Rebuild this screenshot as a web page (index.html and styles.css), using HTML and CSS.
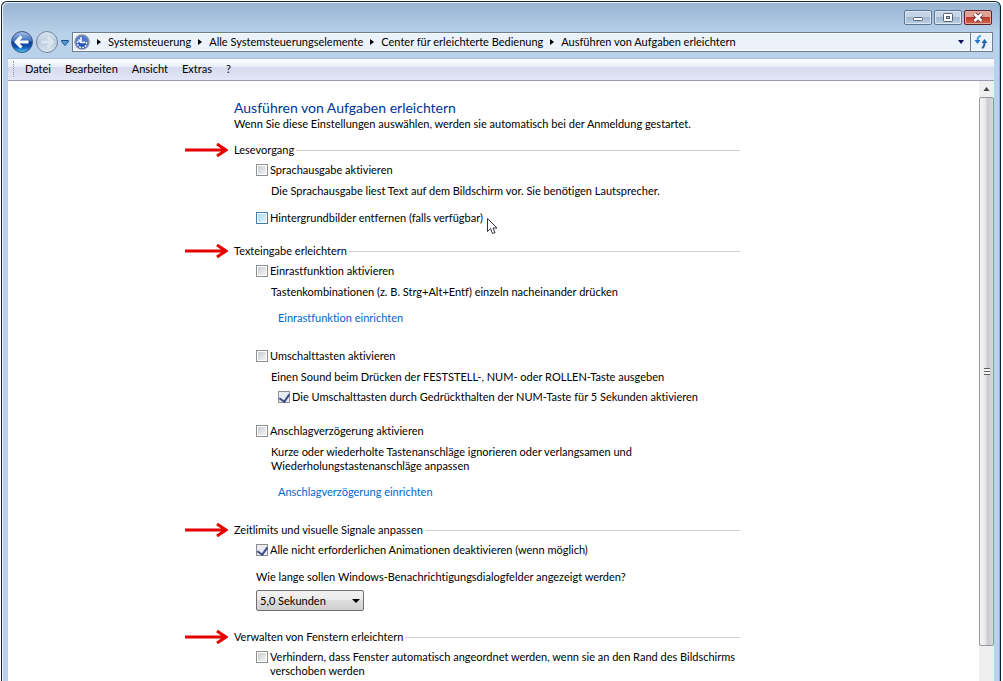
FILE: index.html
```
<!DOCTYPE html>
<html lang="de">
  <head>
    <meta charset="UTF-8" />
    <title>Ausführen von Aufgaben erleichtern</title>
    <link rel="stylesheet" href="styles.css">
  </head>
  <body>
    <div class="window">
      <header class="titlebar">
        <button class="caption" type="button" aria-label="Minimieren">
          <svg width="26" height="13" viewBox="0 0 26 13">
            <rect x="8.5" y="6.5" width="9" height="3" rx="1" fill="#fff" stroke="#535f70" />
          </svg>
        </button>
        <button class="caption" type="button" aria-label="Maximieren">
          <svg width="26" height="13" viewBox="0 0 26 13">
            <rect x="8.5" y="2.5" width="9" height="8" rx="1" fill="#fff" stroke="#535f70" />
            <rect x="11.5" y="5.5" width="3" height="2" fill="#a9bdd3" stroke="#535f70" />
          </svg>
        </button>
        <button class="caption close" type="button" aria-label="Schließen">
          <svg width="26" height="13" viewBox="0 0 26 13">
            <path d="M9.5 3 L16.5 10 M16.5 3 L9.5 10" stroke="#5c3a44" stroke-width="4.5" />
            <path d="M9.5 3 L16.5 10 M16.5 3 L9.5 10" stroke="#fff" stroke-width="2.5" />
          </svg>
        </button>
      </header>

      <div class="navbar">
        <div class="history">
          <button type="button" aria-label="Zurück">
            <svg width="24" height="24" viewBox="0 0 24 24">
              <defs>
                <linearGradient id="back" x1="0" y1="0" x2="0" y2="1">
                  <stop offset="0" stop-color="#a9c4e8" />
                  <stop offset="0.45" stop-color="#3d6fc0" />
                  <stop offset="0.5" stop-color="#0b3a94" />
                  <stop offset="0.75" stop-color="#1458b8" />
                  <stop offset="1" stop-color="#4fd4fa" />
                </linearGradient>
              </defs>
              <circle cx="12" cy="12" r="10.5" fill="url(#back)" stroke="#3c567f" />
              <path d="M11.5 6.5 L6 12 L11.5 17.5 M6.5 12 H18.5" fill="none" stroke="#fff" stroke-width="3" />
            </svg>
          </button>
          <button type="button" aria-label="Vorwärts">
            <svg width="24" height="24" viewBox="0 0 24 24">
              <defs>
                <linearGradient id="forward" x1="0" y1="0" x2="0" y2="1">
                  <stop offset="0" stop-color="#dbe5ef" />
                  <stop offset="0.5" stop-color="#b8cbdc" />
                  <stop offset="1" stop-color="#dce8f3" />
                </linearGradient>
              </defs>
              <circle cx="12" cy="12" r="10.5" fill="url(#forward)" stroke="#73879f" />
              <path d="M12.5 7 L17.5 12 L12.5 17 M17 12 H6" fill="none" stroke="#dbe6f0" stroke-width="3" />
            </svg>
          </button>
          <button type="button" aria-label="Letzte Seiten">
            <svg width="12" height="24" viewBox="0 0 12 24">
              <path d="M1.5 10.5 H8.5 V11.5 L5 15.5 L1.5 11.5 Z" fill="#4d9bd4" stroke="#1f5286" />
            </svg>
          </button>
        </div>

        <nav class="address" aria-label="Adressleiste">
          <svg width="16" height="16" viewBox="0 0 16 16">
            <circle cx="8" cy="8" r="7" fill="#4a78d4" stroke="#8a94a4" stroke-width="1.5" />
            <path d="M2.5 9 a5.500 5.500 0 0 0 11 0 z" fill="#2550b8" />
            <path d="M4 7 a4.500 4.500 0 1 0 8 0" fill="none" stroke="#e8f0ff" stroke-width="1.5" stroke-dasharray="2 1" />
            <path d="M7 3 V8.500 H11 M4.500 5.500 L7 8.500" fill="none" stroke="#fff" stroke-width="1.5" />
          </svg>
          <ol class="crumbs">
            <li><a href="#">Systemsteuerung</a></li>
            <li><a href="#">Alle Systemsteuerungselemente</a></li>
            <li><a href="#">Center für erleichterte Bedienung</a></li>
            <li><a href="#">Ausführen von Aufgaben erleichtern</a></li>
          </ol>
          <button class="recent" type="button" aria-label="Vorherige Orte">
            <svg width="18" height="18" viewBox="0 0 18 18"><path d="M6 7 H12 L9 11 Z" fill="#12125e" /></svg>
          </button>
          <button class="refresh" type="button" aria-label="Aktualisieren">
            <svg width="21" height="18" viewBox="0 0 21 18">
              <path d="M10 3 Q6.5 3 6.5 8" fill="none" stroke="#42a3dc" stroke-width="2" />
              <path d="M3.5 7 H9.5 L6.5 11 Z" fill="#2273c4" />
              <path d="M13.5 9 Q13.5 14 11 15" fill="none" stroke="#245fae" stroke-width="2" />
              <path d="M10.5 10 H16.5 L13.5 6 Z" fill="#245fae" />
            </svg>
          </button>
        </nav>
      </div>

      <div class="client">
        <nav class="menubar" aria-label="Menü">
          <button type="button">Datei</button>
          <button type="button">Bearbeiten</button>
          <button type="button">Ansicht</button>
          <button type="button">Extras</button>
          <button type="button">?</button>
        </nav>

        <div class="view">
          <main class="page">
            <h1>Ausführen von Aufgaben erleichtern</h1>
            <p class="intro">Wenn Sie diese Einstellungen auswählen, werden sie automatisch bei der Anmeldung gestartet.</p>

            <section>
              <h2>
                <svg class="arrow" width="43" height="14" viewBox="0 0 43 14"><path d="M0 7 H41 M32 1 L41 7 L32 13" /></svg>
                Lesevorgang
              </h2>
              <div class="group">
                <label class="check"><input type="checkbox"> Sprachausgabe aktivieren</label>
                <p class="hint">Die Sprachausgabe liest Text auf dem Bildschirm vor. Sie benötigen Lautsprecher.</p>
              </div>
              <div class="group">
                <label class="check hover">
                  <input type="checkbox"> Hintergrundbilder entfernen (falls verfügbar)
                  <svg class="cursor" width="12" height="19" viewBox="0 0 12 19">
                    <path d="M1.5 1.5 V14.5 L4.5 11.5 L6.5 16.5 L9 15.5 L7 11 H11 Z" fill="#fff" stroke="#303038" />
                  </svg>
                </label>
              </div>
            </section>

            <section>
              <h2>
                <svg class="arrow" width="43" height="14" viewBox="0 0 43 14"><path d="M0 7 H41 M32 1 L41 7 L32 13" /></svg>
                Texteingabe erleichtern
              </h2>
              <div class="group linked">
                <label class="check"><input type="checkbox"> Einrastfunktion aktivieren</label>
                <p class="hint">Tastenkombinationen (z. B. Strg+Alt+Entf) einzeln nacheinander drücken</p>
                <a class="setup" href="#">Einrastfunktion einrichten</a>
              </div>
              <div class="group nested">
                <label class="check"><input type="checkbox"> Umschalttasten aktivieren</label>
                <p class="hint">Einen Sound beim Drücken der FESTSTELL-, NUM- oder ROLLEN-Taste ausgeben</p>
                <label class="check sub"><input type="checkbox" checked> Die Umschalttasten durch Gedrückthalten der NUM-Taste für 5 Sekunden aktivieren</label>
              </div>
              <div class="group linked">
                <label class="check"><input type="checkbox"> Anschlagverzögerung aktivieren</label>
                <p class="hint">Kurze oder wiederholte Tastenanschläge ignorieren oder verlangsamen und<br>Wiederholungstastenanschläge anpassen</p>
                <a class="setup" href="#">Anschlagverzögerung einrichten</a>
              </div>
            </section>

            <section>
              <h2>
                <svg class="arrow" width="43" height="14" viewBox="0 0 43 14"><path d="M0 7 H41 M32 1 L41 7 L32 13" /></svg>
                Zeitlimits und visuelle Signale anpassen
              </h2>
              <div class="group">
                <label class="check"><input type="checkbox" checked> Alle nicht erforderlichen Animationen deaktivieren (wenn möglich)</label>
              </div>
              <div class="group">
                <label for="duration">Wie lange sollen Windows-Benachrichtigungsdialogfelder angezeigt werden?</label>
                <div class="dropdown">
                  <select id="duration">
                    <option>5,0 Sekunden</option>
                    <option>7,0 Sekunden</option>
                    <option>15,0 Sekunden</option>
                  </select>
                </div>
              </div>
            </section>

            <section>
              <h2>
                <svg class="arrow" width="43" height="14" viewBox="0 0 43 14"><path d="M0 7 H41 M32 1 L41 7 L32 13" /></svg>
                Verwalten von Fenstern erleichtern
              </h2>
              <div class="group">
                <label class="check"><input type="checkbox"> <span>Verhindern, dass Fenster automatisch angeordnet werden, wenn sie an den Rand des Bildschirms verschoben werden</span></label>
              </div>
            </section>
          </main>

          <div class="scrollbar">
            <svg width="15" height="16" viewBox="0 0 15 16"><path d="M4.5 10 L7.5 6 L10.5 10 Z" fill="#444" /></svg>
            <div class="thumb"><span class="grip"></span></div>
          </div>
        </div>
      </div>
    </div>
  </body>
</html>
```
FILE: styles.css
```
* {
  box-sizing: border-box;
}

html,
body {
  height: 100%;
  margin: 0;
  overflow: hidden;
}

body {
  font-family: Lato, 'Open Sans', sans-serif;
  font-size: 11px;
  font-variant-ligatures: none;
  line-height: 14px;
  color: #000;
  background: #fff;
  padding: 1px 2px 0 1px;
}

h1,
h2,
p,
ol {
  margin: 0;
  padding: 0;
  font-size: 11px;
  font-weight: normal;
}

button {
  font: inherit;
  color: inherit;
  border: 0;
  margin: 0;
  padding: 0;
  background: none;
}

svg {
  display: block;
  flex: none;
}

a {
  color: inherit;
  text-decoration: none;
}

/* window frame */
.window {
  display: flex;
  flex-direction: column;
  height: 100%;
  padding: 0 6px;
  border: 1px solid #1c2328;
  border-right-color: #06222c;
  border-bottom: 0;
  border-radius: 6px 6px 0 0;
  background: linear-gradient(#98b4d2, #b9d1ea 32px, #b9d1ea);
  box-shadow: inset 1px 1px 0 #eaf3fb, inset -1px 0 0 #48cdf2;
}

.titlebar {
  display: flex;
  justify-content: flex-end;
  gap: 2px;
  padding: 8px 2px 0 0;
  height: 30px;
}

.caption {
  width: 28px;
  height: 15px;
  border: 1px solid #5f7690;
  border-radius: 2px;
  background: linear-gradient(#c5d5e7 50%, #a2b9d1 50%, #b9cfe4);
  box-shadow: inset 0 0 0 1px #dbe7f2;
}

.close {
  border-color: #5b2228;
  background: linear-gradient(#dfa093 45%, #bb3a2b 50%, #d2674f);
  box-shadow: inset 0 0 0 1px #e4aba0;
}

/* back, forward and address bar */
.navbar {
  display: flex;
  align-items: center;
  height: 20px;
  padding-right: 1px;
}

.history {
  display: flex;
  align-items: center;
  gap: 1px;
  padding-left: 2px;
}

.address {
  display: flex;
  flex: 1;
  align-items: center;
  height: 20px;
  border: 1px solid #6f7f92;
  padding-left: 1px;
  background: #ebf2fa;
  box-shadow: inset 0 0 0 1px #f8fbfe;
}

.crumbs {
  display: flex;
  flex: 1;
  list-style: none;
}

.crumbs li {
  display: flex;
  align-items: center;
}

.crumbs li::before {
  content: '';
  border: 3px solid transparent;
  border-left: 4px solid #000;
  border-right: 0;
  margin: 0 7px 0 7px;
}

.refresh {
  border-left: 1px solid #6f7f92;
}

/* client area */
.client {
  display: flex;
  flex: 1;
  flex-direction: column;
  min-height: 0;
  margin-top: 6px;
  border-top: 1px solid #a3bedb;
}

.menubar {
  display: flex;
  align-items: center;
  gap: 14px;
  height: 22px;
  padding: 0 0 2px 5px;
  border-bottom: 1px solid #9a9cab;
  background: linear-gradient(#fff, #e8ecf6 8px, #d5daee 8px, #e2e6f6);
}

.menubar::before {
  content: '';
  height: 16px;
  margin-right: -3px;
  border-left: 1px dotted #8f96ab;
}

.view {
  display: flex;
  flex: 1;
  min-height: 0;
  background: #fff;
}

.page {
  flex: 1;
  padding: 18px 0 0 226px;
}

.page > * {
  max-width: 506px;
}

.page h1 {
  font-size: 14px;
  line-height: 18px;
  color: #003399;
}

.intro {
  margin-bottom: 12px;
}

section {
  margin-bottom: 19px;
}

.page h2 {
  display: flex;
  align-items: center;
  margin-left: -49px;
}

.page h2::after {
  content: '';
  flex: 1;
  margin-left: 2px;
  border-top: 1px solid #d0d0d0;
}

.arrow {
  margin-right: 6px;
  fill: none;
  stroke: #e60000;
  stroke-width: 3;
}

.group {
  margin: 6px 0 13px 22px;
}

section .group + .group {
  margin-top: 0;
}

.group.linked {
  margin-bottom: 24px;
}

.group.nested {
  margin-bottom: 20px;
}

.check {
  display: flex;
  position: relative;
  gap: 2px;
}

.check input {
  appearance: none;
  flex: none;
  width: 12px;
  height: 12px;
  margin: 1px 0 0;
  padding: 1px;
  border: 1px solid #8e8f8f;
  background: linear-gradient(135deg, #c8ccd1, #f4f4f4) content-box #fff;
}

.check input:checked {
  padding: 0 2px;
  background: #e8ebf2;
}

.check input:checked::before {
  content: '';
  display: block;
  width: 5px;
  height: 8px;
  border: solid #3a4a86;
  border-width: 0 2px 2px 0;
  transform: rotate(35deg);
}

.check.hover input {
  border-color: #3c7fb1;
  background: linear-gradient(135deg, #a9dbf7, #e2f4fd) content-box #d9f0fc;
}

.cursor {
  position: absolute;
  left: 230px;
  top: 6px;
}

.hint {
  margin: 7px 0 0 15px;
}

.setup {
  display: block;
  margin: 12px 0 0 22px;
  color: #0066cc;
}

.check.sub {
  margin: 6px 0 0 22px;
}

.dropdown {
  display: grid;
  align-items: center;
  width: 108px;
  margin-top: 6px;
}

.dropdown select {
  grid-area: 1 / 1;
  appearance: none;
  height: 21px;
  padding: 0 3px;
  border: 1px solid #707070;
  border-radius: 2px;
  background: linear-gradient(#f2f2f2, #ebebeb 50%, #dddddd 50%, #cfcfcf);
  font: inherit;
  color: #000;
}

.dropdown::after {
  content: '';
  grid-area: 1 / 1;
  justify-self: end;
  margin-right: 4px;
  border: 4px solid transparent;
  border-top-color: #000;
  border-bottom: 0;
  pointer-events: none;
}

/* scrollbar */
.scrollbar {
  display: flex;
  flex-direction: column;
  width: 15px;
  padding-bottom: 35px;
  background: #efefef;
}

.thumb {
  display: flex;
  flex: 1;
  align-items: center;
  justify-content: center;
  border: 1px solid #979797;
  border-radius: 2px;
  background: linear-gradient(90deg, #f5f5f5, #e6e6e8 45%, #c9cace 55%, #d8d8db);
}

.grip {
  width: 6px;
  height: 7px;
  background: repeating-linear-gradient(#606060 0 1px, #f4f4f4 1px 3px);
}
```
